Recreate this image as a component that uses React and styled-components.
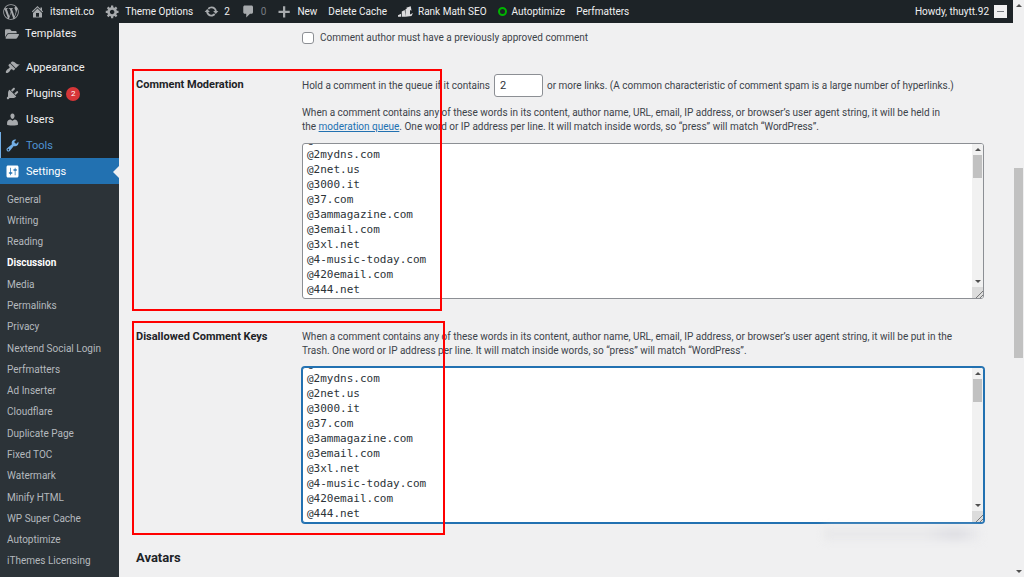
import React, { useLayoutEffect, useRef } from "react";
import styled, { createGlobalStyle, css } from "styled-components";
import { FaFolderOpen, FaWordpressSimple } from "react-icons/fa";

const icons = {
  home: "M16 8.5l1.53 1.53-1.06 1.06L10 4.6l-6.47 6.49-1.06-1.06L10 2.5l4 4v-2h2v4zm-6-2.46l6 5.99V18H4v-5.97zM12 17v-5H8v5h4z",
  generic:
    "M18 12h-2.18c-.17.7-.44 1.35-.81 1.93l1.54 1.54-2.1 2.1-1.54-1.54c-.58.36-1.23.63-1.91.79V19H8v-2.18c-.68-.16-1.33-.43-1.91-.79l-1.54 1.54-2.12-2.12 1.54-1.54c-.36-.58-.63-1.23-.79-1.91H1V9.03h2.17c.16-.7.44-1.35.8-1.94L2.43 5.55l2.1-2.1 1.54 1.54c.58-.37 1.24-.64 1.93-.81V2h3v2.18c.68.16 1.33.43 1.91.79l1.54-1.54 2.12 2.12-1.54 1.54c.36.59.64 1.24.8 1.94H18V12zm-8.5 1.5c1.66 0 3-1.34 3-3s-1.34-3-3-3-3 1.34-3 3 1.34 3 3 3z",
  update:
    "M10.2 3.28c3.53 0 6.43 2.61 6.92 6h2.08l-3.5 4-3.5-4h2.32c-.45-1.97-2.21-3.45-4.32-3.45-1.45 0-2.73.71-3.54 1.78L4.95 5.66C6.23 4.2 8.11 3.28 10.2 3.28zm-.4 13.44c-3.52 0-6.43-2.61-6.92-6H.8l3.5-4c1.17 1.33 2.33 2.67 3.5 4H5.48c.45 1.97 2.21 3.45 4.32 3.45 1.45 0 2.73-.71 3.54-1.78l1.71 1.95c-1.28 1.46-3.15 2.38-5.25 2.38z",
  comments:
    "M5 2h9c1.1 0 2 .9 2 2v7c0 1.1-.9 2-2 2h-2l-5 5v-5H5c-1.1 0-2-.9-2-2V4c0-1.1.9-2 2-2z",
  plus: "M17 9v3h-6v6H8v-6H2V9h6V3h3v6h6z",
  appearance:
    "M14.48 11.06L7.41 3.99l1.5-1.5c.5-.56 2.3-.47 3.51.32 1.21.8 1.43 1.28 2.91 2.1 1.18.64 2.45 1.26 4.45.85zm-.71.71L6.7 4.7 4.93 6.47c-.39.39-.39 1.02 0 1.41l1.06 1.06c.39.39.39 1.03 0 1.42-.6.6-1.43 1.11-2.21 1.69-.35.26-.7.53-1.01.84C1.43 14.23.4 16.08 1.4 17.07c.99 1 2.84-.03 4.18-1.36.31-.31.58-.66.85-1.02.57-.78 1.08-1.61 1.69-2.21.39-.39 1.02-.39 1.41 0l1.06 1.06c.39.39 1.02.39 1.41 0z",
  plugins:
    "M13.11 4.36L9.87 7.6 8 5.73l3.24-3.24c.35-.34 1.05-.2 1.56.32.52.51.66 1.21.31 1.55zm-8 1.77l.91-1.12 9.01 9.01-1.19.84c-.71.71-2.63 1.16-3.82 1.16H6.14L4.9 17.26c-.59.59-1.54.59-2.12 0-.59-.58-.59-1.53 0-2.12l1.24-1.24v-3.88c0-1.13.4-3.19 1.09-3.89zm7.26 3.97l3.24-3.24c.34-.35 1.04-.21 1.55.31.52.51.66 1.21.31 1.55l-3.24 3.25z",
  users:
    "M10 9.25c-2.27 0-2.73-3.44-2.73-3.44C7 4.02 7.82 2 9.97 2c2.16 0 2.98 2.02 2.71 3.81 0 0-.41 3.44-2.68 3.44zm0 2.57L12.72 10c2.39 0 4.52 2.33 4.52 4.53v2.49s-3.65 1.13-7.24 1.13c-3.65 0-7.24-1.13-7.24-1.13v-2.49c0-2.25 1.94-4.48 4.47-4.48z",
  tools:
    "M16.68 9.77c-1.34 1.34-3.3 1.67-4.95.99l-5.41 6.52c-.99.99-2.59.99-3.58 0s-.99-2.59 0-3.57l6.52-5.42c-.68-1.65-.35-3.61.99-4.95 1.28-1.28 3.12-1.62 4.72-1.06l-2.89 2.89 2.82 2.82 2.86-2.87c.53 1.58.18 3.39-1.08 4.65zM3.81 16.21c.4.39 1.04.39 1.43 0 .4-.4.4-1.04 0-1.43-.39-.4-1.03-.4-1.43 0-.39.39-.39 1.03 0 1.43z",
  settings:
    "M18 16V4c0-1.1-.9-2-2-2H4c-1.1 0-2 .9-2 2v12c0 1.1.9 2 2 2h12c1.1 0 2-.9 2-2zM8 11h1c.55 0 1 .45 1 1s-.45 1-1 1H8v1.5c0 .28-.22.5-.5.5s-.5-.22-.5-.5V13H6c-.55 0-1-.45-1-1s.45-1 1-1h1V5.5c0-.28.22-.5.5-.5s.5.22.5.5V11zm5-2h-1c-.55 0-1-.45-1-1s.45-1 1-1h1V5.5c0-.28.22-.5.5-.5s.5.22.5.5V7h1c.55 0 1 .45 1 1s-.45 1-1 1h-1v5.5c0 .28-.22.5-.5.5s-.5-.22-.5-.5V9z",
  rank: "M0 15l4-2v4H0zM5 10l4-2 1 9H5zM10 7l2-1-1-1 6-2 1 6-2-1v6l4-2-2 4-8 1z",
};

const submenu = [
  "General",
  "Writing",
  "Reading",
  "Discussion",
  "Media",
  "Permalinks",
  "Privacy",
  "Nextend Social Login",
  "Perfmatters",
  "Ad Inserter",
  "Cloudflare",
  "Duplicate Page",
  "Fixed TOC",
  "Watermark",
  "Minify HTML",
  "WP Super Cache",
  "Autoptimize",
  "iThemes Licensing",
];

const blockedWords = [
  "@24horas.com",
  "@2mydns.com",
  "@2net.us",
  "@3000.it",
  "@37.com",
  "@3ammagazine.com",
  "@3email.com",
  "@3xl.net",
  "@4-music-today.com",
  "@420email.com",
  "@444.net",
].join("\n");

const GlobalStyle = createGlobalStyle`
  * {
    box-sizing: border-box;
  }

  body {
    margin: 0;
    background: #f0f0f1;
    color: #3c434a;
    font-family: Roboto, "Liberation Sans", sans-serif;
    font-size: 10px;
    line-height: 14px;
  }
`;

const Window = styled.div`
  display: flex;
  height: 100vh;
  overflow: hidden;
`;

const Page = styled.div`
  flex: 1;
  min-width: 0;
  display: flex;
  flex-direction: column;
`;

const AdminBar = styled.header`
  flex: none;
  display: flex;
  align-items: center;
  height: 23px;
  padding: 0 6px 0 3px;
  background: #1d2327;
`;

const BarLink = styled.a`
  display: flex;
  align-items: center;
  gap: 5px;
  margin-right: 11px;
  color: ${(props) => (props.$dim ? "#787c82" : "#f0f0f1")};
  text-decoration: none;
  white-space: nowrap;

  svg {
    color: ${(props) => (props.$bright ? "#dcdcde" : "#a7aaad")};
  }
`;

const Account = styled(BarLink)`
  margin: 0 0 0 auto;
`;

const Avatar = styled.span`
  display: grid;
  place-items: center;
  width: 13px;
  height: 13px;
  background: #f0f0f1;

  &::after {
    content: "";
    width: 7px;
    height: 1px;
    background: #787c82;
  }
`;

const Ring = styled.span`
  width: 9px;
  height: 9px;
  border: 2px solid #00b400;
  border-radius: 50%;
`;

const Body = styled.div`
  flex: 1;
  min-height: 0;
  display: flex;
`;

const Sidebar = styled.nav`
  flex: none;
  display: flex;
  flex-direction: column;
  width: 119px;
  background: #1d2327;
`;

const MenuLink = styled.a`
  position: relative;
  flex: none;
  display: flex;
  align-items: center;
  gap: 6px;
  height: 26px;
  padding: 1px 0 0 5px;
  color: #f0f0f1;
  font-size: 11px;
  text-decoration: none;

  svg {
    color: #a7aaad;
  }

  ${(props) =>
    props.$hover &&
    css`
      padding-left: 4px;
      border-left: 1px solid #72aee6;
      color: #4f94d4;

      svg {
        color: #72aee6;
      }
    `}

  ${(props) =>
    props.$current &&
    css`
      background: #2271b1;
      color: #fff;

      svg {
        color: #fff;
      }

      &::after {
        content: "";
        position: absolute;
        right: 0;
        border: 6px solid transparent;
        border-right-color: #f0f0f1;
        border-left-width: 0;
      }
    `}
`;

const FirstMenuLink = styled(MenuLink)`
  height: 23px;
  margin-bottom: 8px;
  padding-bottom: 3px;
`;

const Count = styled.span`
  display: grid;
  place-items: center;
  width: 14px;
  height: 14px;
  margin-left: -2px;
  border-radius: 50%;
  background: #d63638;
  color: #fff;
  font-size: 8px;
`;

const Submenu = styled.ul`
  flex: 1;
  display: grid;
  grid-auto-rows: 1fr;
  align-items: center;
  margin: 0;
  padding: 5px 0 5px 7px;
  background: #2c3338;
  list-style: none;
`;

const SubmenuLink = styled.a`
  color: ${(props) => (props.$current ? "#fff" : "#b4b9be")};
  font-weight: ${(props) => (props.$current ? 700 : 400)};
  text-decoration: none;
`;

const Content = styled.main`
  flex: 1;
  min-width: 0;
  padding: 8px 29px 0 17px;
`;

const FormRow = styled.section`
  position: relative;
  display: grid;
  grid-template-columns: 153px minmax(0, 1fr);
  column-gap: 13px;
  margin-bottom: ${(props) => props.$space}px;
`;

const RowTitle = styled.h3`
  margin: ${(props) => props.$top || 0}px 0 0;
  color: #1d2327;
  font-size: 11px;
  line-height: 14px;
  font-weight: 700;
`;

const CheckLabel = styled.label`
  grid-column: 2;
  display: flex;
  align-items: center;
  gap: 6px;
`;

const Checkbox = styled.input`
  appearance: none;
  width: 12px;
  height: 12px;
  margin: 0;
  border: 1px solid #8c8f94;
  border-radius: 3px;
  background: #fff;
`;

const LinksLabel = styled.label`
  display: flex;
  align-items: center;
  gap: 4px;
  margin-bottom: 9px;
  white-space: nowrap;
`;

const NumberInput = styled.input`
  width: 49px;
  height: 23px;
  padding: 0 5px;
  border: 1px solid #8c8f94;
  border-radius: 3px;
  background: #fff;
  color: #2c3338;
  font: inherit;
  font-size: 11px;
`;

const Help = styled.label`
  display: block;
  margin-bottom: 9px;
  padding-right: 30px;
`;

const Link = styled.a`
  color: #2271b1;
`;

const WordsBox = styled.div`
  display: flex;
  height: 156px;
  overflow: hidden;
  border: 1px solid ${(props) => (props.$focused ? "#2271b1" : "#8c8f94")};
  border-radius: 3px;
  box-shadow: ${(props) => (props.$focused ? "0 0 0 1px #2271b1" : "none")};
  background: #fff;
`;

const Words = styled.textarea`
  flex: 1;
  min-width: 0;
  margin: 0;
  padding: 2px 4px;
  border: 0;
  outline: 0;
  resize: none;
  overflow: hidden;
  background: transparent;
  color: #2c3338;
  font-family: "DejaVu Sans Mono", monospace;
  font-size: 11px;
  line-height: 15px;
`;

const Track = styled.div`
  flex: none;
  display: flex;
  flex-direction: column;
  align-items: center;
  width: 11px;
  background: #f1f1f1;
`;

const Arrow = styled.span`
  margin: 4px 0;
  border: 3px solid transparent;
  border-top: 0 solid #505050;
  border-bottom: 3px solid #505050;

  ${(props) =>
    props.$down &&
    css`
      margin-top: auto;
      border-top: 3px solid #505050;
      border-bottom: 0;
    `}
`;

const Thumb = styled.span`
  width: 9px;
  height: 23px;
  background: #c1c1c1;
`;

const Grip = styled.svg`
  flex: none;
  width: 11px;
  height: 11px;
  background: #dcdcdc;
`;

const PageTrack = styled(Track)`
  background: #f0f0f1;
`;

const PageThumb = styled(Thumb)`
  flex: 0 0 33%;
  margin-top: 157px;
`;

const Highlight = styled.div`
  position: absolute;
  top: ${(props) => props.$top}px;
  bottom: -12px;
  left: -4px;
  width: ${(props) => props.$width}px;
  border: 2px solid #f00;
  pointer-events: none;
`;

const Shade = styled.div`
  position: absolute;
  top: calc(100% + 5px);
  right: 4px;
  width: 156px;
  height: 12px;
  background: linear-gradient(90deg, #e8e8ea 65%, #dcdce2 85%, #ececee);
  filter: blur(4px);
`;

const Heading = styled.h2`
  margin: 0;
  color: #1d2327;
  font-size: 13px;
  line-height: 16px;
`;

function Icon({ name, size = 15 }) {
  return (
    <svg width={size} height={size} viewBox="0 0 20 20" fill="currentColor" aria-hidden="true">
      <path d={icons[name]} />
    </svg>
  );
}

function WordList({ id, focused }) {
  const ref = useRef(null);

  useLayoutEffect(() => {
    ref.current.scrollTop = 14;
  }, []);

  return (
    <WordsBox $focused={focused}>
      <Words id={id} ref={ref} defaultValue={blockedWords} spellCheck={false} />
      <Track>
        <Arrow />
        <Thumb />
        <Arrow $down />
        <Grip viewBox="0 0 11 11" stroke="#777" aria-hidden="true">
          <path d="M4 11l7-7M8 11l3-3" />
        </Grip>
      </Track>
    </WordsBox>
  );
}

export default function App() {
  return (
    <Window>
      <GlobalStyle />
      <Page>
        <AdminBar>
          <BarLink href="#" aria-label="WordPress">
            <FaWordpressSimple size={16} />
          </BarLink>
          <BarLink href="#">
            <Icon name="home" />
            itsmeit.co
          </BarLink>
          <BarLink href="#">
            <Icon name="generic" />
            Theme Options
          </BarLink>
          <BarLink href="#">
            <Icon name="update" />2
          </BarLink>
          <BarLink href="#" $dim>
            <Icon name="comments" />0
          </BarLink>
          <BarLink href="#">
            <Icon name="plus" />
            New
          </BarLink>
          <BarLink href="#">Delete Cache</BarLink>
          <BarLink href="#" $bright>
            <Icon name="rank" />
            Rank Math SEO
          </BarLink>
          <BarLink href="#">
            <Ring />
            Autoptimize
          </BarLink>
          <BarLink href="#">Perfmatters</BarLink>
          <Account href="#">
            Howdy, thuytt.92
            <Avatar />
          </Account>
        </AdminBar>
        <Body>
          <Sidebar>
            <FirstMenuLink href="#">
              <FaFolderOpen size={14} />
              Templates
            </FirstMenuLink>
            <MenuLink href="#">
              <Icon name="appearance" />
              Appearance
            </MenuLink>
            <MenuLink href="#">
              <Icon name="plugins" />
              Plugins
              <Count>2</Count>
            </MenuLink>
            <MenuLink href="#">
              <Icon name="users" />
              Users
            </MenuLink>
            <MenuLink href="#" $hover>
              <Icon name="tools" />
              Tools
            </MenuLink>
            <MenuLink href="#" $current>
              <Icon name="settings" />
              Settings
            </MenuLink>
            <Submenu>
              {submenu.map((item) => (
                <li key={item}>
                  <SubmenuLink href="#" $current={item === "Discussion"}>
                    {item}
                  </SubmenuLink>
                </li>
              ))}
            </Submenu>
          </Sidebar>
          <Content>
            <FormRow $space={29}>
              <CheckLabel>
                <Checkbox type="checkbox" />
                Comment author must have a previously approved comment
              </CheckLabel>
            </FormRow>
            <FormRow $space={31}>
              <RowTitle $top={4}>Comment Moderation</RowTitle>
              <div>
                <LinksLabel>
                  Hold a comment in the queue if it contains
                  <NumberInput type="text" inputMode="numeric" defaultValue="2" />
                  or more links. (A common characteristic of comment spam is a large number of
                  hyperlinks.)
                </LinksLabel>
                <Help htmlFor="moderation_keys">
                  When a comment contains any of these words in its content, author name, URL,
                  email, IP address, or browser’s user agent string, it will be held in the{" "}
                  <Link href="#">moderation queue</Link>. One word or IP address per line. It will
                  match inside words, so “press” will match “WordPress”.
                </Help>
                <WordList id="moderation_keys" />
              </div>
              <Highlight $top={-5} $width={310} />
            </FormRow>
            <FormRow $space={27}>
              <RowTitle>Disallowed Comment Keys</RowTitle>
              <div>
                <Help htmlFor="disallowed_keys">
                  When a comment contains any of these words in its content, author name, URL,
                  email, IP address, or browser’s user agent string, it will be put in the Trash.
                  One word or IP address per line. It will match inside words, so “press” will
                  match “WordPress”.
                </Help>
                <WordList id="disallowed_keys" focused />
              </div>
              <Highlight $top={-9} $width={313} />
              <Shade />
            </FormRow>
            <Heading>Avatars</Heading>
          </Content>
        </Body>
      </Page>
      <PageTrack>
        <Arrow />
        <PageThumb />
        <Arrow $down />
      </PageTrack>
    </Window>
  );
}
